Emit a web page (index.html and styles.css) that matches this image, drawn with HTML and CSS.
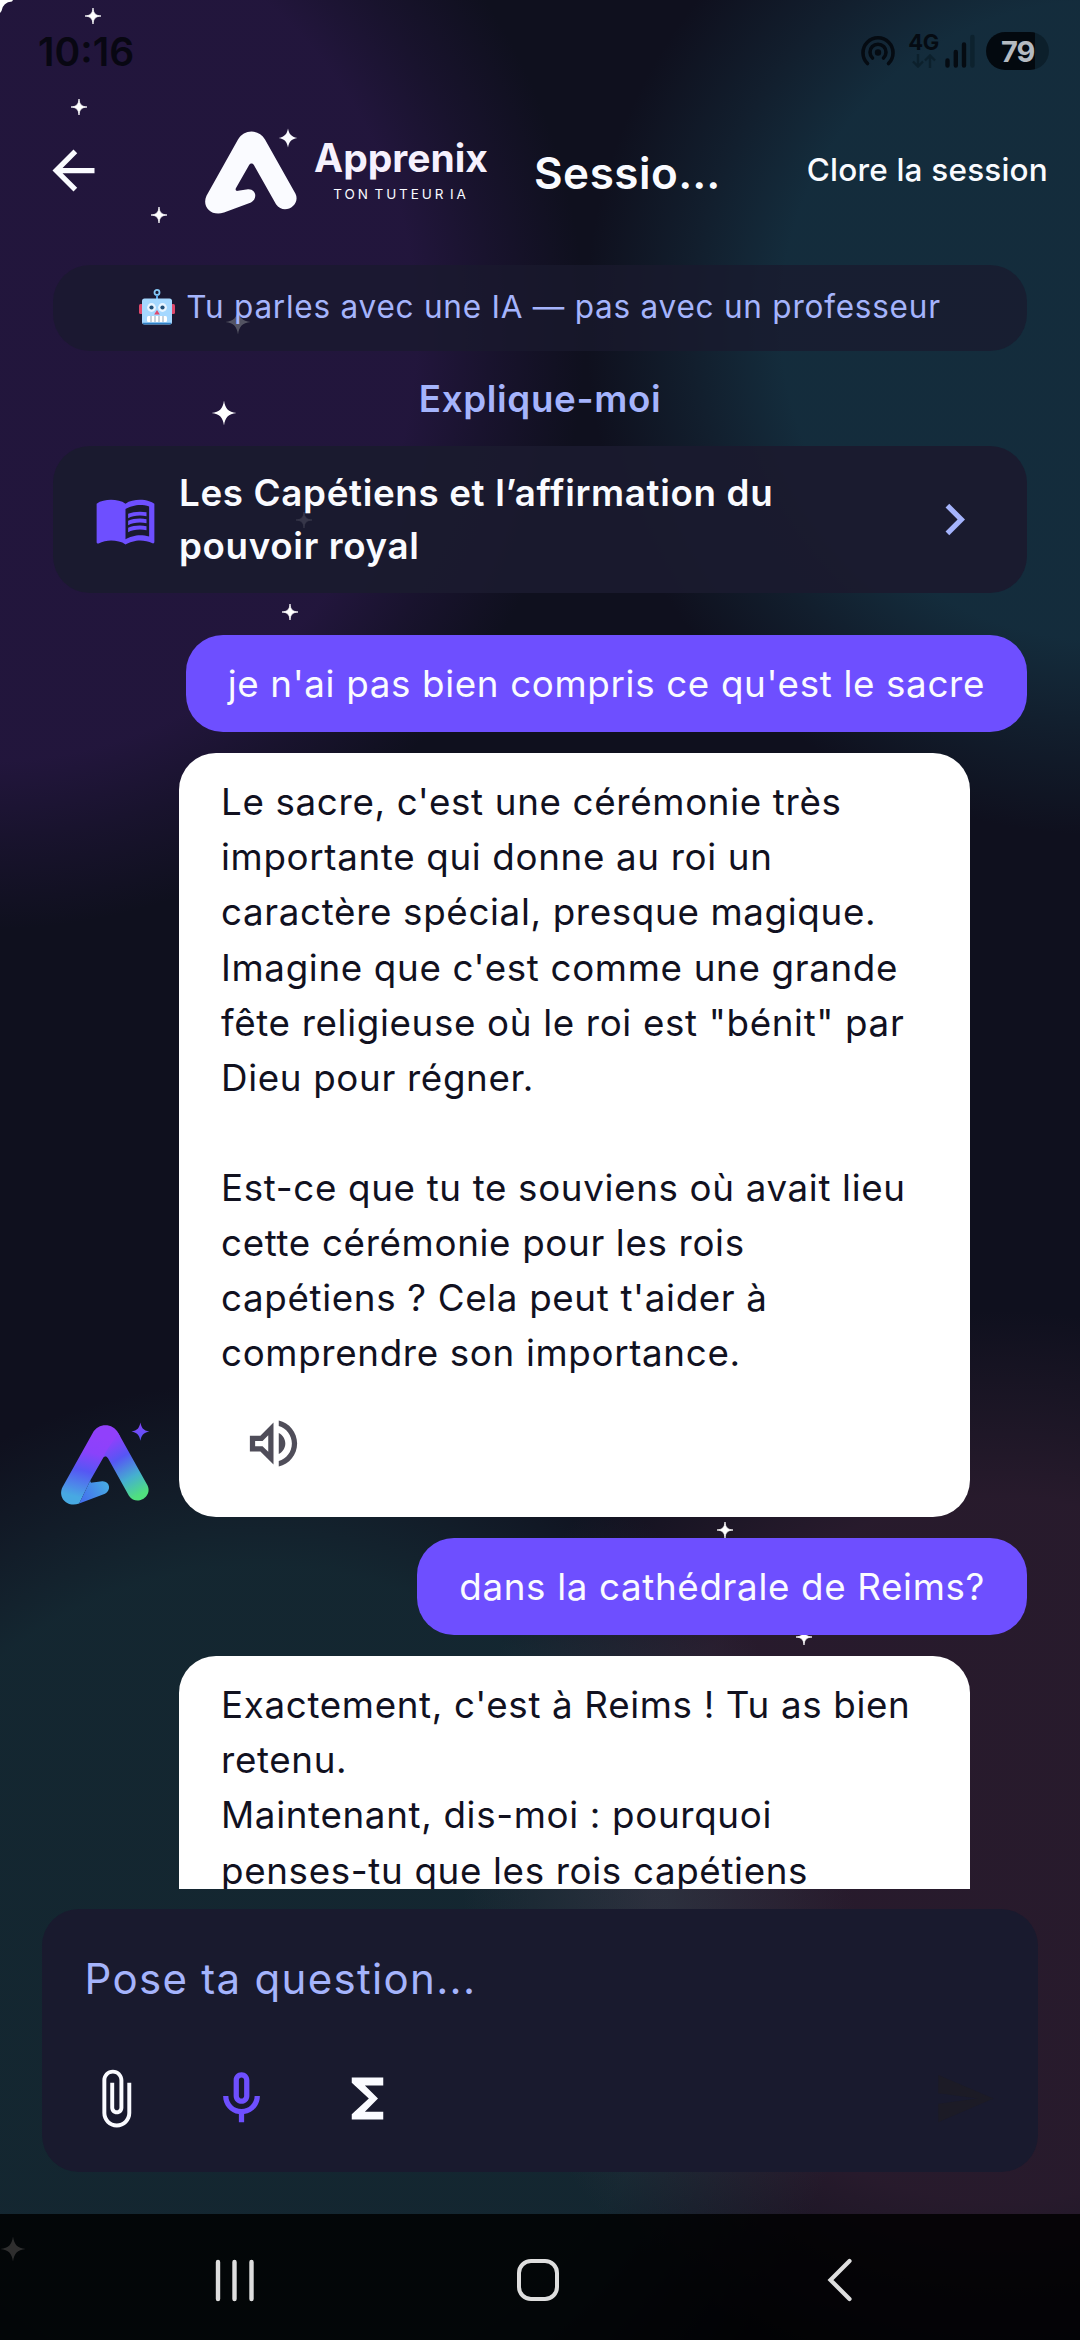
FILE: index.html
```html
<!DOCTYPE html>
<html lang="fr">
<head>
<meta charset="utf-8">
<title>Apprenix</title>
<link rel="stylesheet" href="styles.css">
</head>
<body>
<svg class="defs" width="0" height="0" aria-hidden="true">
  <defs>
    <symbol id="star" viewBox="-12 -12 24 24"><path d="M0-12C1.2-4 4-1.2 12 0 4 1.2 1.2 4 0 12-1.2 4-4 1.2-12 0-4-1.2-1.2-4 0-12z"/></symbol>
    <symbol id="spark" viewBox="-8 -8 16 16"><path d="M0-8C.5-2.400 2.400-.5 8 0 2.400.5.5 2.400 0 8-.5 2.400-2.400.5-8 0-2.400-.5-.5-2.400 0-8z" stroke="#fff" stroke-width=".8"/></symbol>
    <linearGradient id="lg-left" gradientUnits="userSpaceOnUse" x1="50" y1="10" x2="30" y2="84"><stop offset=".1" stop-color="#9140fb"/><stop offset=".35" stop-color="#8a42fb"/><stop offset=".62" stop-color="#5656f4"/><stop offset="1" stop-color="#47a9e2"/></linearGradient>
    <linearGradient id="lg-right" gradientUnits="userSpaceOnUse" x1="44" y1="20" x2="80" y2="80"><stop offset=".08" stop-color="#8a42fb"/><stop offset=".36" stop-color="#5656f4"/><stop offset=".7" stop-color="#45b0cf"/><stop offset="1" stop-color="#50e07e"/></linearGradient>
    <linearGradient id="lg-foot" gradientUnits="userSpaceOnUse" x1="18" y1="75" x2="46" y2="62"><stop offset="0" stop-color="#4471ee"/><stop offset="1" stop-color="#47a9e2"/></linearGradient>
    <linearGradient id="lg-star" gradientUnits="userSpaceOnUse" x1="80" y1="0" x2="86" y2="19"><stop offset="0" stop-color="#8a42fb"/><stop offset="1" stop-color="#5656f4"/></linearGradient>
  </defs>
</svg>
<div class="screen">
  <div class="sky">
    <svg class="corner" width="13" height="13" viewBox="0 0 13 13"><path d="M0 0H13L12 1.500Q3 2 1.500 11L0 13z" fill="#fff"/></svg>
    <svg class="spark" style="left:93px;top:16px"><use href="#spark"/></svg>
    <svg class="spark" style="left:79px;top:107px"><use href="#spark"/></svg>
    <svg class="spark" style="left:159px;top:215px"><use href="#spark"/></svg>
    <svg class="star" style="left:238px;top:322px"><use href="#star"/></svg>
    <svg class="star" style="left:224px;top:413px"><use href="#star"/></svg>
    <svg class="spark" style="left:290px;top:612px"><use href="#spark"/></svg>
    <svg class="spark" style="left:725px;top:1530px"><use href="#spark"/></svg>
    <svg class="spark" style="left:804px;top:1637px"><use href="#spark"/></svg>
    <svg class="star" style="left:13px;top:2249px"><use href="#star"/></svg>
  </div>

  <div class="statusbar">
    <span class="clock">10:16</span>
    <div class="indicators">
      <svg class="hotspot" viewBox="0 0 36 32"><g fill="none" stroke="#050b12" stroke-width="3.600" stroke-linecap="round"><path d="M7.500 28.500a15 15 0 1 1 21 0"/><path d="M12.500 23a8 8 0 1 1 11 0"/></g><circle cx="18" cy="17.500" r="3.200" fill="#050b12"/></svg>
      <div class="net"><span class="gen">4G</span><svg width="26" height="14" viewBox="0 0 26 14"><path d="M7 0v12M2 7.500l5 5 5-5M19 14V2M14 6.500l5-5 5 5" fill="none" stroke="#0c202c" stroke-width="2.400"/></svg></div>
      <svg class="signal" viewBox="0 0 30 34"><g stroke-width="4.400" stroke-linecap="round"><path d="M2.500 26.500v5M10.800 18v13.500M19 10.500v21" stroke="#050b12"/><path d="M27.400 3v28.500" stroke="#0d222e"/></g></svg>
      <div class="battery"><span>79</span></div>
    </div>
  </div>

  <header class="appbar">
    <svg class="icon" viewBox="0 0 24 24"><path d="M20 11H7.830l5.590-5.590L12 4l-8 8 8 8 1.410-1.410L7.830 13H20v-2z"/></svg>
    <svg class="logo" viewBox="0 0 92 89" preserveAspectRatio="none"><path d="M33 12C39 .8 54 .8 60 12L90.500 68C96 80 79 91 71 79L49 38.500C48 36 45 36 44 38.500L31 62C30 64 31 65.500 33 65L43 63.500C51 63 53 73 46 77L19 87.500C6 92-3.500 81 1.500 70Z"/><path d="M83 .5c1.200 6 3 8.300 9.300 9.800-6.300 1.500-8.100 3.800-9.300 9.800-1.200-6-3-8.300-9.300-9.800C80 8.800 81.800 6.500 83 .5z"/></svg>
    <div class="brand"><span class="brand-name">Apprenix</span><span class="brand-tag">TON TUTEUR IA</span></div>
    <h1 class="title">Sessio…</h1>
    <span class="close">Clore la session</span>
  </header>

  <main class="chat">
    <div class="notice"><svg class="robot" viewBox="0 0 36 36"><circle cx="18" cy="3.400" r="2.500" fill="none" stroke="#87c8f5" stroke-width="1.800"/><path d="M18 6v4" stroke="#5ba7e8" stroke-width="2"/><rect x="0" y="15" width="4" height="10" rx="1.500" fill="#e0486a"/><rect x="32" y="15" width="4" height="10" rx="1.500" fill="#e0486a"/><rect x="3" y="9.500" width="30" height="26" rx="2.500" fill="#a5d8ff"/><path d="M4 34.500h28" stroke="#2f7fc4" stroke-width="1.500"/><circle cx="12.500" cy="18.500" r="4.400" fill="#e8f4ff"/><circle cx="23.500" cy="18.500" r="4.400" fill="#e8f4ff"/><circle cx="12.500" cy="18.500" r="2.100" fill="#21507a"/><circle cx="23.500" cy="18.500" r="2.100" fill="#21507a"/><path d="M18 21l2.800 4.500h-5.600z" fill="#e0486a"/><rect x="8" y="27" width="20" height="6" rx="1.500" fill="#fff"/><path d="M12 27v6M16 27v6M20 27v6M24 27v6" stroke="#8fa5b8" stroke-width="1"/></svg><span>Tu parles avec une IA — pas avec un professeur</span></div>
    <div class="mode">Explique-moi</div>
    <div class="topic">
      <svg class="icon accent" viewBox="0 0 24 24"><path d="M21 5c-1.110-.35-2.330-.5-3.500-.5-1.950 0-4.050.4-5.500 1.500-1.450-1.100-3.550-1.500-5.500-1.500S2.450 4.900 1 6v14.650c0 .25.25.5.5.5.1 0 .15-.05.25-.05C3.100 20.450 5.050 20 6.500 20c1.950 0 4.050.4 5.500 1.500 1.350-.85 3.800-1.500 5.500-1.500 1.650 0 3.350.3 4.750 1.050.1.050.15.050.25.050.25 0 .5-.25.5-.5V6c-.6-.45-1.250-.75-2-1zm0 13.500c-1.100-.35-2.300-.5-3.500-.5-1.700 0-4.150.65-5.500 1.500V8c1.350-.85 3.800-1.500 5.500-1.500 1.200 0 2.400.15 3.500.5v11.500z"/><path d="M17.500 10.500c.88 0 1.730.09 2.500.26V9.240c-.79-.15-1.640-.24-2.500-.24-1.700 0-3.240.29-4.500.83v1.660c1.130-.64 2.700-.99 4.500-.99zM13 12.490v1.660c1.130-.64 2.700-.99 4.500-.99.88 0 1.730.09 2.500.26V11.900c-.79-.15-1.640-.24-2.500-.24-1.700 0-3.240.3-4.500.83zM17.500 14.330c-1.700 0-3.240.29-4.500.83v1.660c1.130-.64 2.700-.99 4.500-.99.88 0 1.730.09 2.500.26v-1.520c-.79-.16-1.640-.24-2.500-.24z"/></svg>
      <span class="topic-name">Les Capétiens et l’affirmation du<br>pouvoir royal</span>
      <svg class="icon chevron" viewBox="0 0 24 24"><path d="M10 6L8.590 7.410 13.170 12l-4.580 4.590L10 18l6-6z"/></svg>
      <svg class="spark faint"><use href="#spark"/></svg>
    </div>
    <div class="thread">
      <div class="bubble user">je n'ai pas bien compris ce qu'est le sacre</div>
      <div class="reply">
        <svg class="avatar" viewBox="0 0 92 89" preserveAspectRatio="none"><path fill="url(#lg-left)" d="M33 12C39 .8 54 .8 60 12L62 16 49 38.500C48 36 45 36 44 38.500L31 62 19 87.500C6 92-3.500 81 1.500 70Z"/><path fill="url(#lg-foot)" d="M31 62C30 64 31 65.500 33 65L43 63.500C51 63 53 73 46 77L19 87.500Z"/><path fill="url(#lg-right)" d="M60 12L90.500 68C96 80 79 91 71 79L49 38.500C48 36 45 36 44 38.500Q47 30 60 12Z"/><path fill="url(#lg-star)" d="M83 .5c1.200 6 3 8.300 9.300 9.800-6.300 1.500-8.100 3.800-9.300 9.800-1.200-6-3-8.300-9.300-9.800C80 8.800 81.800 6.500 83 .5z"/></svg>
        <div class="bubble tutor">Le sacre, c'est une cérémonie très<br>importante qui donne au roi un<br>caractère spécial, presque magique.<br>Imagine que c'est comme une grande<br>fête religieuse où le roi est "bénit" par<br>Dieu pour régner.<br><br>Est-ce que tu te souviens où avait lieu<br>cette cérémonie pour les rois<br>capétiens ? Cela peut t'aider à<br>comprendre son importance.
          <div class="speak"><svg class="icon" viewBox="0 0 24 24"><path d="M3 9v6h4l5 5V4L7 9H3zm7-.17v6.340L7.830 13H5v-2h2.830L10 8.830zM16.500 12c0-1.770-1.020-3.290-2.500-4.030v8.050c1.480-.73 2.500-2.250 2.500-4.020zM14 3.230v2.060c2.890.86 5 3.540 5 6.710s-2.110 5.850-5 6.710v2.060c4.010-.91 7-4.490 7-8.770 0-4.280-2.990-7.860-7-8.770z"/></svg></div>
        </div>
      </div>
      <div class="bubble user">dans la cathédrale de Reims?</div>
      <div class="reply">
        <div class="bubble tutor continued">Exactement, c'est à Reims ! Tu as bien<br>retenu.<br>Maintenant, dis-moi : pourquoi<br>penses-tu que les rois capétiens</div>
      </div>
    </div>
  </main>

  <div class="composer">
    <div class="placeholder">Pose ta question...</div>
    <div class="tools">
      <div class="tool"><svg class="icon white" viewBox="0 0 24 24"><path d="M16.500 6v11.500c0 2.210-1.790 4-4 4s-4-1.790-4-4V5c0-1.380 1.120-2.500 2.500-2.500s2.500 1.120 2.500 2.500v10.500c0 .55-.45 1-1 1s-1-.45-1-1V6H10v9.500c0 1.380 1.120 2.500 2.500 2.500s2.500-1.120 2.500-2.500V5c0-2.210-1.790-4-4-4S7 2.790 7 5v12.500c0 3.040 2.460 5.500 5.500 5.500s5.500-2.460 5.500-5.500V6h-1.500z"/></svg></div>
      <div class="tool"><svg class="icon accent" viewBox="0 0 24 24"><path d="M12 14c1.660 0 3-1.340 3-3V5c0-1.660-1.340-3-3-3S9 3.340 9 5v6c0 1.660 1.340 3 3 3zm-1-9c0-.55.45-1 1-1s1 .45 1 1v6c0 .55-.45 1-1 1s-1-.45-1-1V5zm6 6c0 2.760-2.240 5-5 5s-5-2.240-5-5H5c0 3.530 2.610 6.430 6 6.920V21h2v-3.080c3.390-.49 6-3.390 6-6.920h-2z"/></svg></div>
      <div class="tool"><svg class="icon white" viewBox="0 0 24 24"><path d="M18 4H6v2l6.500 6L6 18v2h12v-3h-7l5-5-5-5h7V4z"/></svg></div>
      <div class="tool send"><svg class="icon" viewBox="0 0 24 24"><path d="M2.010 21L23 12 2.010 3 2 10l15 2-15 2z"/></svg></div>
    </div>
  </div>

  <nav class="navbar">
    <svg width="42" height="44" viewBox="0 0 42 44"><path d="M4 4v37M20.500 4v37M37.500 4v37" fill="none" stroke="#dedede" stroke-width="4.400" stroke-linecap="round"/></svg>
    <svg width="42" height="42" viewBox="0 0 42 42"><rect x="2" y="2" width="38" height="38" rx="12" fill="none" stroke="#dedede" stroke-width="4"/></svg>
    <svg width="26" height="44" viewBox="0 0 26 44"><path d="M22.500 3L3.500 22l19 19" fill="none" stroke="#dedede" stroke-width="4.200" stroke-linecap="round"/></svg>
  </nav>
</div>
</body>
</html>
```
FILE: styles.css
```css
* { box-sizing: border-box; }
body { margin: 0; background: #0f101e; font-family: Inter, "Noto Sans", sans-serif; }
.defs { position: absolute; }
.screen {
  position: relative;
  width: 1080px;
  height: 2340px;
  overflow: hidden;
  display: flex;
  flex-direction: column;
  background:
    radial-gradient(circle 600px at -15px 330px, #140622 0, #140622 72%, #0a0311 85%, #000 100%),
    radial-gradient(circle 515px at 1100px 320px, #051e22 0, #051e22 62%, #030f11 80%, #000 100%),
    radial-gradient(circle 600px at 260px 1980px, #051815 0, #051815 69%, #030c0b 84%, #000 100%),
    radial-gradient(circle 540px at 1000px 1850px, #1a0b10 0, #1a0b10 65%, #0d0608 82%, #000 100%),
    #0f101e;
  background-blend-mode: screen;
}
.sky { position: absolute; inset: 0; }
.corner { display: block; }
.spark, .star { position: absolute; fill: #fff; transform: translate(-50%, -50%); overflow: visible; }
.spark { width: 16px; height: 16px; }
.star { width: 25px; height: 25px; }
.icon { width: 63px; height: 63px; flex: none; fill: currentColor; }
.accent { color: #6e4fff; }
.white { color: #fafbff; }

.statusbar { position: relative; height: 102px; flex: none; display: flex; justify-content: space-between; align-items: center; padding: 0 31px 0 38px; }
.clock { font-size: 39px; font-weight: 600; color: #080712; }
.indicators { display: flex; align-items: center; }
.hotspot { width: 36px; height: 32px; margin-right: 12px; }
.net { width: 31px; display: flex; flex-direction: column; align-items: center; gap: 3px; margin-right: 6px; }
.gen { font-size: 22px; line-height: 17px; font-weight: 700; color: #050b12; letter-spacing: -.5px; }
.signal { width: 30px; height: 34px; margin-right: 11px; }
.battery { width: 63px; height: 38px; border-radius: 19px; background: linear-gradient(90deg, #03090f 49px, #0c1f2b 49px); display: flex; align-items: center; padding-left: 15px; font-size: 29px; font-weight: 700; color: #b4bac1; letter-spacing: -1px; }

.appbar { position: relative; height: 137px; flex: none; display: flex; align-items: center; padding: 0 32px 0 42px; color: #fafbff; }
.logo { width: 92px; height: 86px; margin-left: 100px; fill: #fafbff; overflow: visible; }
.brand { width: 176px; margin-left: 16px; display: flex; flex-direction: column; align-items: center; padding-bottom: 5px; }
.brand-name { font-size: 39px; line-height: 44px; font-weight: 700; color: #f6f1fd; }
.brand-tag { font-size: 13.500px; line-height: 14px; margin-top: 7px; letter-spacing: 2.900px; word-spacing: -3px; white-space: nowrap; }
.title { margin: 4px 0 0 45px; font-size: 44px; font-weight: 600; letter-spacing: .5px; }
.close { margin-left: auto; padding-bottom: 3px; font-size: 31.500px; font-weight: 500; letter-spacing: .2px; }

.chat { position: relative; height: 1650px; flex: none; overflow: hidden; padding: 26px 53px 0; }
.notice { height: 86px; padding-bottom: 3px; border-radius: 37px; background: rgba(26,26,46,.75); display: flex; align-items: center; justify-content: center; gap: 11px; color: #a5b4fc; font-size: 31.500px; letter-spacing: .77px; }
.robot { width: 36px; height: 36px; }
.mode { height: 95px; line-height: 95px; text-align: center; color: #a5b4fc; font-size: 36.750px; font-weight: 600; letter-spacing: .656px; }
.topic { position: relative; height: 147px; border-radius: 37px; background: rgba(26,26,46,.95); display: flex; align-items: center; padding: 0 41px; color: #fafbff; }
.topic-name { flex: 1; margin-left: 22px; font-size: 36.750px; line-height: 52.500px; font-weight: 600; letter-spacing: .656px; }
.chevron { color: #a5b4fc; }
.faint { left: 251px; top: 74px; opacity: .12; }
.thread { margin-top: 42px; display: flex; flex-direction: column; gap: 21px; }
.bubble { font-size: 36.750px; line-height: 55.125px; letter-spacing: .656px; border-radius: 37px; padding: 21px 42px; white-space: nowrap; }
.user { align-self: flex-end; background: #6e4fff; color: #fafbff; }
.reply { display: flex; align-items: flex-end; }
.avatar { width: 88px; height: 83px; margin: 0 -96px 12px 8px; overflow: visible; }
.tutor { width: 791px; margin-left: 126px; background: #fff; color: #11111f; padding-bottom: 10.500px; }
.continued { padding-bottom: 80px; }
.speak { width: 105px; height: 126px; display: flex; align-items: center; justify-content: center; color: #4f4d59; }

.composer { position: relative; margin: 20px 42px 0; height: 263px; flex: none; border-radius: 37px; background: #191a2e; padding: 0 10.500px 10.500px; display: flex; flex-direction: column; }
.placeholder { padding: 43px 32px 0; height: 126px; color: #a5b4fc; font-size: 42px; line-height: 54px; letter-spacing: 1.312px; }
.tools { display: flex; height: 126px; }
.tool { width: 126px; display: flex; align-items: center; justify-content: center; }
.send { margin-left: auto; color: #1c1b26; }

.navbar { position: relative; margin-top: auto; height: 126px; flex: none; background: rgba(0,0,0,.82); display: grid; grid-template-columns: repeat(3, 302.500px); padding: 5px 0 0 84px; justify-items: center; align-items: center; }
```
